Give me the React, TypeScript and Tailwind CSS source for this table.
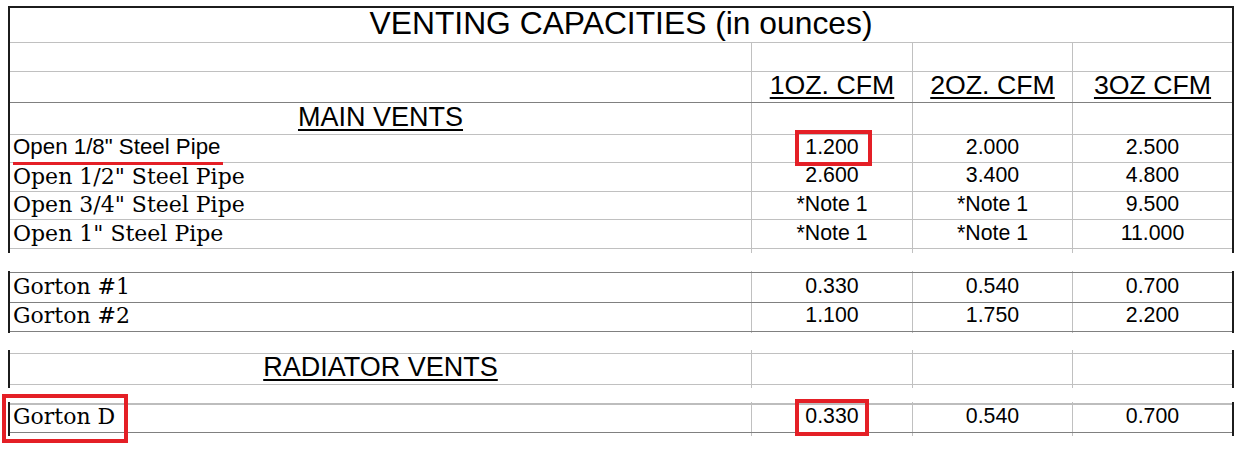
import React from "react";

// venting capacities sheet (spreadsheet screenshot)

const light = "border-[#c0c0c0]";
const sans = "font-['Liberation_Sans',Arial,sans-serif]";
const serif = "font-['DejaVu_Serif','Liberation_Serif',serif]";

type RowProps = {
  h: string;
  line?: string;
  label?: React.ReactNode;
  labelClass?: string;
  vals?: React.ReactNode[];
  valClass?: string;
};

function Row({ h, line = "", label, labelClass = "", vals = [], valClass = "" }: RowProps) {
  return (
    <div className={`grid grid-cols-[741px_161px_160px_160px] ${h} ${line}`}>
      <div className={`leading-none whitespace-nowrap ${labelClass}`}>{label}</div>
      {[0, 1, 2].map((i) => (
        <div key={i} className={`border-l ${light} text-center leading-none whitespace-nowrap ${valClass}`}>
          {vals[i]}
        </div>
      ))}
    </div>
  );
}

const data = `${sans} text-[21.3px] text-black`;
const serifLabel = `pl-[3px] ${serif} text-[22px]`;
const ul = "underline decoration-[2px] underline-offset-[3px]";

export default function App() {
  return (
    <div className="relative w-[1241px] h-[456px] bg-white overflow-hidden text-black">
      {/* section 1 */}
      <div className="ml-[8px] mt-[6px] w-[1226px] border-t-2 border-l-2 border-r-2 border-[#1c1c1c]">
        <div className={`h-[35px] border-b ${light} text-center leading-none ${sans} text-[31.8px]`}>
          VENTING CAPACITIES (in ounces)
        </div>
        <Row h="h-[29px]" line={`border-b ${light}`} />
        <Row
          h="h-[31px]"
          line="border-b border-[#808080]"
          valClass={`${sans} text-[26.7px]`}
          vals={["1OZ. CFM", "2OZ. CFM", "3OZ CFM"].map((t) => (
            <span key={t} className={ul}>
              {t}
            </span>
          ))}
        />
        <Row
          h="h-[32px]"
          line={`border-b ${light}`}
          labelClass={`text-center pt-[1px] ${sans} text-[27px]`}
          label={<span className={ul}>MAIN VENTS</span>}
        />
        <Row
          h="h-[28px]"
          line={`border-b ${light}`}
          labelClass={`pl-[3px] pt-[1px] ${sans} text-[22.3px]`}
          label={'Open 1/8" Steel Pipe'}
          valClass={`pt-[2px] ${data}`}
          vals={["1.200", "2.000", "2.500"]}
        />
        <Row
          h="h-[29px]"
          line={`border-b ${light}`}
          labelClass={`pt-[3px] ${serifLabel}`}
          label={'Open 1/2" Steel Pipe'}
          valClass={`pt-[2px] ${data}`}
          vals={["2.600", "3.400", "4.800"]}
        />
        <Row
          h="h-[28px]"
          line={`border-b ${light}`}
          labelClass={`pt-[2px] ${serifLabel}`}
          label={'Open 3/4" Steel Pipe'}
          valClass={`pt-[2px] ${data}`}
          vals={["*Note 1", "*Note 1", "9.500"]}
        />
        <Row
          h="h-[29px]"
          line={`border-b ${light}`}
          labelClass={`pt-[3px] ${serifLabel}`}
          label={'Open 1" Steel Pipe'}
          valClass={`pt-[3px] ${data}`}
          vals={["*Note 1", "*Note 1", "11.000"]}
        />
        <Row h="h-[4px]" />
      </div>

      {/* section 2 */}
      <div className="ml-[8px] mt-[18px] w-[1226px] border-l-2 border-r-2 border-[#1c1c1c]">
        <Row h="h-[2px]" line="border-b border-[#808080]" />
        <Row
          h="h-[30px]"
          line="border-b border-[#808080]"
          labelClass={`pt-[3px] ${serifLabel}`}
          label="Gorton #1"
          valClass={`pt-[3px] ${data}`}
          vals={["0.330", "0.540", "0.700"]}
        />
        <Row
          h="h-[29px]"
          line="border-b border-[#808080]"
          labelClass={`pt-[2px] ${serifLabel}`}
          label="Gorton #2"
          valClass={`pt-[2px] ${data}`}
          vals={["1.100", "1.750", "2.200"]}
        />
        <Row h="h-[1px]" />
      </div>

      {/* section 3 */}
      <div className="ml-[8px] mt-[17px] w-[1226px] border-l-2 border-r-2 border-[#1c1c1c]">
        <Row h="h-[4px]" line={`border-b ${light}`} />
        <Row
          h="h-[31px]"
          line={`border-b ${light}`}
          labelClass={`text-center ${sans} text-[27px]`}
          label={<span className={ul}>RADIATOR VENTS</span>}
        />
        <Row h="h-[3px]" />
      </div>

      {/* section 4 */}
      <div className="ml-[8px] mt-[14px] w-[1226px] border-l-2 border-r-2 border-[#1c1c1c]">
        <Row h="h-[3px]" line="border-b-2 border-[#bdbdbd]" />
        <Row
          h="h-[28px]"
          line="border-b border-[#808080]"
          labelClass={`pt-[1px] ${serifLabel}`}
          label="Gorton D"
          valClass={`pt-[1px] ${data}`}
          vals={["0.330", "0.540", "0.700"]}
        />
        <Row h="h-[3px]" />
      </div>

      {/* red annotations */}
      <div className="absolute left-[13px] top-[162px] w-[210px] h-[3px] bg-[#e41f26]" />
      <div className="absolute left-[795px] top-[130px] w-[77px] h-[36px] border-4 border-[#e41f26]" />
      <div className="absolute left-[795px] top-[399px] w-[74px] h-[37px] border-4 border-[#e41f26]" />
      <div className="absolute left-[2px] top-[394px] w-[126px] h-[49px] border-4 border-[#e41f26]" />
    </div>
  );
}
